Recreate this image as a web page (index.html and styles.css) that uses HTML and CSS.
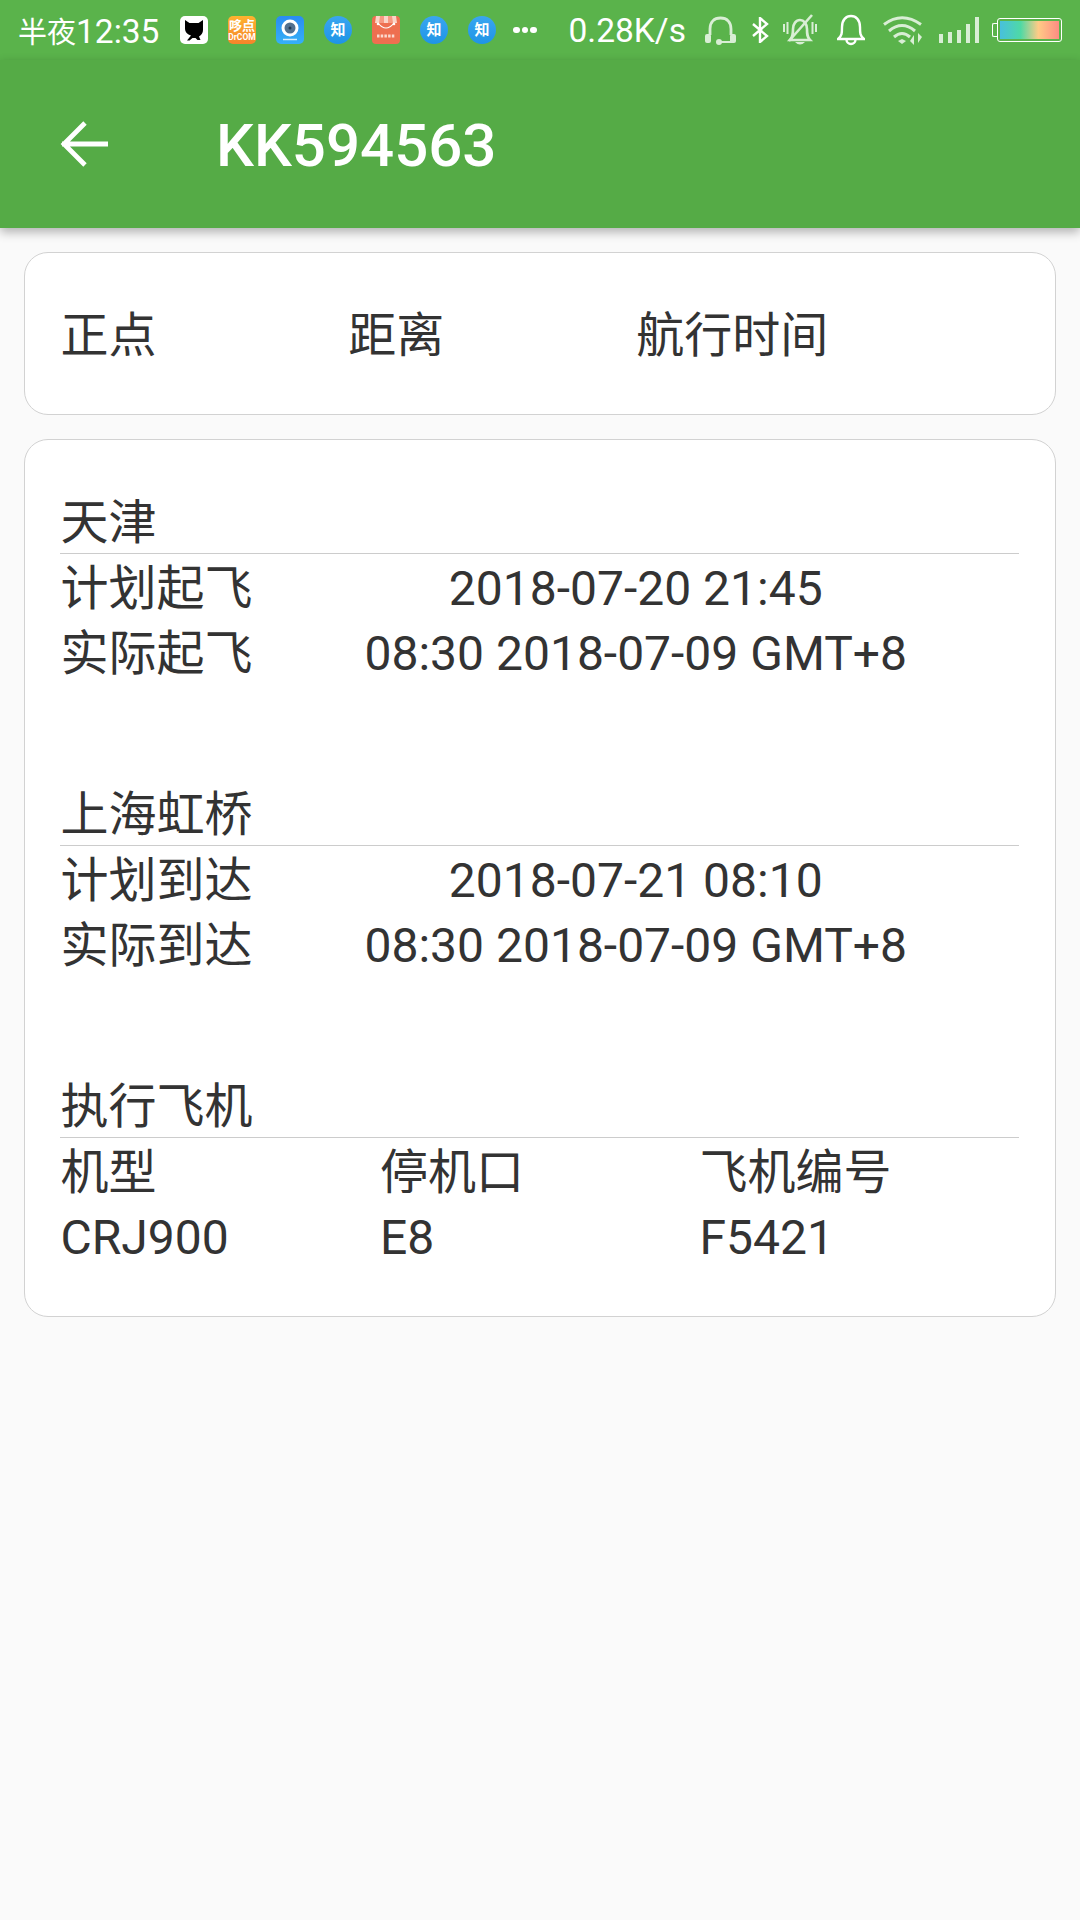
FILE: index.html
```html
<!DOCTYPE html>
<html lang="zh-CN">
<head>
    <meta charset="UTF-8">
    <meta name="viewport" content="width=device-width, initial-scale=1.0">
    <title>KK594563</title>
    <link rel="stylesheet" href="styles.css">
</head>
<body>
    <div class="status-bar">
        <span class="status-time"><span class="status-cjk">半夜</span>12:35</span>
        <div class="notify-icons">
            <svg class="notify-icon" viewBox="0 0 28 28">
                <rect width="28" height="28" rx="5" fill="#fff"/>
                <path d="M5 4l4.500 3h9L23 4v10c0 3-1.500 5-4 6.500l1.500 3.500h-3l-2-2h-3l-3 2.500H7l4-5c-3.500-1-6-3.500-6-7z" fill="#000"/>
            </svg>
            <div class="notify-icon app-drcom">
                <span class="drcom-top">哆点</span>
                <span class="drcom-bottom">DrCOM</span>
            </div>
            <svg class="notify-icon" viewBox="0 0 28 28">
                <defs>
                    <linearGradient id="camBg" x1="0" y1="0" x2="0" y2="1">
                        <stop offset="0" stop-color="#2a8cf2"/>
                        <stop offset="1" stop-color="#35b0f7"/>
                    </linearGradient>
                </defs>
                <rect width="28" height="28" rx="5" fill="url(#camBg)"/>
                <circle cx="14" cy="12" r="8.500" fill="#fff"/>
                <circle cx="14" cy="12" r="5.500" fill="#52708f"/>
                <circle cx="14" cy="12" r="1.500" fill="#22384f"/>
                <path d="M7 23.500h14" stroke="#d5eeff" stroke-width="1.500"/>
            </svg>
            <div class="notify-icon app-zhihu">知</div>
            <svg class="notify-icon" viewBox="0 0 28 28">
                <rect width="28" height="28" rx="4" fill="#ee6f50"/>
                <path d="M4 0h20l1 7H3z" fill="#fbd5c8"/>
                <path d="M8 0h4v7H7zM16 0h4l1 7h-5z" fill="#f69a82"/>
                <path d="M6 7q8 10 16 0" stroke="#fff" stroke-width="1.200" fill="none"/>
                <circle cx="6" cy="8" r="1.300" fill="#fff"/>
                <circle cx="22" cy="8" r="1.300" fill="#fff"/>
                <path d="M5 20h18" stroke="#fbd9ce" stroke-width="3" stroke-dasharray="2.500 1.200"/>
            </svg>
            <div class="notify-icon app-zhihu">知</div>
            <div class="notify-icon app-zhihu">知</div>
            <div class="more-dots"><i></i><i></i><i></i></div>
        </div>
        <span class="net-speed">0.28K/s</span>
        <div class="sys-icons">
            <svg class="headset" viewBox="0 0 31 29" fill="none">
                <path d="M5 19V13C5 6 9 2 15.500 2S26 6 26 13v6" stroke="#d9eed5" stroke-width="2.800"/>
                <rect x="0" y="18" width="6" height="9" rx="2" fill="#d9eed5"/>
                <rect x="25" y="18" width="6" height="9" rx="2" fill="#d9eed5"/>
                <path d="M14 26h13" stroke="#d9eed5" stroke-width="2"/>
                <circle cx="14" cy="26" r="3" fill="#d9eed5"/>
            </svg>
            <svg class="bluetooth" viewBox="0 0 17 26" fill="none">
                <path d="M1 7l14 12-7 6V1l7 6L1 19" stroke="#fff" stroke-width="2.400"/>
            </svg>
            <svg class="bell-muted" viewBox="0 0 34 32" fill="none">
                <path d="M7 26c3-3 3-6 3-11 0-5 3-9 7-9s7 4 7 9c0 5 0 8 3 11z" stroke="#d9eed5" stroke-width="2.600"/>
                <path d="M12 28h10q-5 5-10 0z" fill="#d9eed5"/>
                <path d="M6 27L29 1" stroke="#d9eed5" stroke-width="2.600"/>
                <path d="M1 10v8M4.500 8v12M29.500 8v12M33 10v8" stroke="#d9eed5" stroke-width="2"/>
            </svg>
            <svg class="bell" viewBox="0 0 28 32" fill="none">
                <path d="M1 25c4-3 4-6 4-12C5 6 9 2 14 2s9 4 9 11c0 6 0 9 4 12z" stroke="#fff" stroke-width="2.400"/>
                <path d="M9.500 25.500a4.500 4.500 0 0 0 9 0" stroke="#fff" stroke-width="2.400"/>
            </svg>
            <svg class="wifi" viewBox="0 0 41 31" fill="none">
                <path d="M1 9.500Q19-4 38 9.500" stroke="#d9eed5" stroke-width="3"/>
                <path d="M6 16Q19 5 32 16" stroke="#d9eed5" stroke-width="3"/>
                <path d="M11 22Q19 15 27 22" stroke="#d9eed5" stroke-width="3"/>
                <path d="M15 26l4-2 4 2-4 3z" fill="#d9eed5"/>
                <path d="M31 30V20l-4 6zM35 18v10l4-6z" fill="#d9eed5"/>
            </svg>
            <svg class="signal" viewBox="0 0 40 26" fill="#d9eed5">
                <rect x="0" y="17" width="4" height="9"/>
                <rect x="9" y="15" width="4" height="11"/>
                <rect x="18" y="13" width="4" height="13"/>
                <rect x="27" y="7" width="4" height="19"/>
                <rect x="36" y="0" width="4" height="26"/>
            </svg>
            <div class="battery">
                <span class="battery-cap"></span>
                <div class="battery-body"><span class="battery-fill"></span></div>
            </div>
        </div>
    </div>

    <div class="app-bar">
        <svg class="back-icon" viewBox="0 0 48 48" fill="none">
            <path d="M2 24H48M25 3L4 24l21 21" stroke="#fff" stroke-width="4.800"/>
        </svg>
        <span class="app-title">KK594563</span>
    </div>

    <div class="card summary-card">
        <div class="summary-col">正点</div>
        <div class="summary-col">距离</div>
        <div class="summary-col">航行时间</div>
    </div>

    <div class="card detail-card">
        <div class="section">
            <div class="section-title">天津</div>
            <div class="row">
                <span class="row-label">计划起飞</span>
                <span class="row-value">2018-07-20 21:45</span>
            </div>
            <div class="row">
                <span class="row-label">实际起飞</span>
                <span class="row-value">08:30 2018-07-09 GMT+8</span>
            </div>
        </div>
        <div class="section">
            <div class="section-title">上海虹桥</div>
            <div class="row">
                <span class="row-label">计划到达</span>
                <span class="row-value">2018-07-21 08:10</span>
            </div>
            <div class="row">
                <span class="row-label">实际到达</span>
                <span class="row-value">08:30 2018-07-09 GMT+8</span>
            </div>
        </div>
        <div class="section">
            <div class="section-title">执行飞机</div>
            <div class="plane-grid">
                <span>机型</span>
                <span>停机口</span>
                <span>飞机编号</span>
                <span>CRJ900</span>
                <span>E8</span>
                <span>F5421</span>
            </div>
        </div>
    </div>
</body>
</html>
```

FILE: styles.css
```css
body {
    font-family: Roboto, "Noto Sans CJK SC", sans-serif;
    margin: 0;
    padding: 0;
    background-color: #fafafa;
    color: #333;
    font-size: 48px;
    height: 1920px;
    overflow: hidden;
}

/* status bar */
.status-bar {
    display: flex;
    align-items: center;
    height: 60px;
    padding-left: 18px;
    background-color: #5ab34b;
    color: #fff;
    font-size: 33.500px;
}

.status-time {
    width: 162px;
    white-space: nowrap;
}

.status-cjk {
    font-size: 29px;
}

.notify-icons {
    display: flex;
    align-items: center;
    gap: 20px;
}

.notify-icon {
    display: block;
    width: 28px;
    height: 28px;
}

.app-drcom {
    display: flex;
    flex-direction: column;
    align-items: center;
    justify-content: center;
    border-radius: 5px;
    background: linear-gradient(#fdb32f, #f7842a);
    font-weight: 700;
    line-height: 1;
    overflow: hidden;
}

.drcom-top {
    font-size: 13px;
    height: 14px;
}

.drcom-bottom {
    font-size: 8.500px;
    height: 9px;
}

.app-zhihu {
    border-radius: 50%;
    background: linear-gradient(#3aa6f0, #1e94e6);
    font-size: 15px;
    font-weight: 700;
    line-height: 28px;
    text-align: center;
}

.more-dots {
    display: flex;
    gap: 2px;
    margin-left: -3px;
}

.more-dots i {
    width: 6.500px;
    height: 6.500px;
    border-radius: 50%;
    background-color: #fff;
}

.net-speed {
    margin-left: 32px;
    white-space: nowrap;
}

.sys-icons {
    display: flex;
    align-items: center;
    margin-left: 19px;
}

.headset {
    width: 31px;
    height: 29px;
}

.bluetooth {
    width: 17px;
    height: 26px;
    margin-left: 16px;
}

.bell-muted {
    width: 34px;
    height: 32px;
    margin-left: 14px;
}

.bell {
    width: 28px;
    height: 32px;
    margin-left: 20px;
}

.wifi {
    width: 41px;
    height: 31px;
    margin-left: 18px;
}

.signal {
    width: 40px;
    height: 26px;
    margin-left: 15px;
}

.battery {
    display: flex;
    align-items: center;
    margin-left: 13px;
}

.battery-cap {
    width: 4px;
    height: 12px;
    border: 1px solid #fff;
    border-right: none;
    border-radius: 2px 0 0 2px;
}

.battery-body {
    width: 65px;
    height: 24px;
    box-sizing: border-box;
    padding: 2px;
    border: 1.500px solid #fff;
    border-radius: 3px;
}

.battery-fill {
    display: block;
    height: 100%;
    background: linear-gradient(90deg, #48c0dd, #4fd9a5 35%, #ffcb86 65%, #ff8c83);
}

/* app bar */
.app-bar {
    display: flex;
    align-items: center;
    height: 168px;
    padding-left: 60px;
    background-color: #55ab46;
    color: #fff;
    box-shadow: 0 4px 10px rgba(0, 0, 0, 0.3);
}

.back-icon {
    width: 48px;
    height: 48px;
}

.app-title {
    margin: 3px 0 0 108px;
    font-size: 60px;
    font-weight: 500;
}

/* cards */
.card {
    margin: 24px 24px 0;
    background-color: #fff;
    border: 1px solid #d2d2d2;
    border-radius: 24px;
}

.summary-card {
    display: flex;
    align-items: center;
    height: 163px;
    box-sizing: border-box;
    padding: 0 35px 5px 35.500px;
}

.summary-col {
    width: 30%;
}

.detail-card {
    padding: 48px 36px 46px 35.500px;
}

.section + .section {
    margin-top: 96px;
}

.section-title {
    height: 65px;
    margin-left: -0.500px;
    padding-left: 0.500px;
    line-height: 70px;
    border-bottom: 1px solid #ccc;
}

.row {
    display: flex;
    height: 63px;
    padding-top: 2px;
    line-height: 65px;
}

.row-label {
    width: 192px;
}

.row-value {
    flex: 1;
    text-align: center;
}

.plane-grid {
    display: grid;
    grid-template-columns: repeat(3, 1fr);
    grid-auto-rows: 65px;
    padding-top: 2px;
    line-height: 65px;
}
```
